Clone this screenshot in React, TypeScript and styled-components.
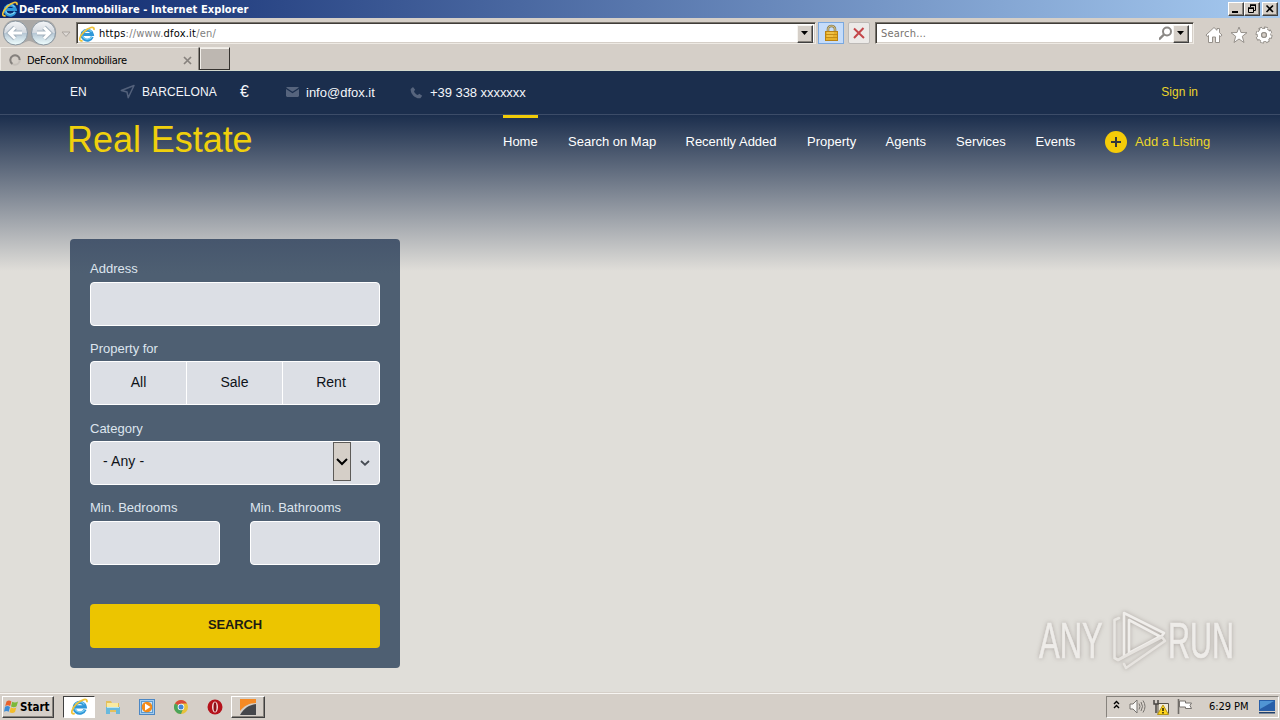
import React from "react";
import styled, { createGlobalStyle } from "styled-components";

const GlobalStyle = createGlobalStyle`
  * {
    box-sizing: border-box;
  }
  body {
    margin: 0;
    overflow: hidden;
    font-family: "Liberation Sans", Arial, sans-serif;
  }
  svg {
    display: block;
    flex: none;
  }
`;

const Screen = styled.div`
  display: flex;
  flex-direction: column;
  width: 1280px;
  height: 720px;
  background: #d5cfc8;
`;

/* browser window */

const TitleBar = styled.div`
  display: flex;
  align-items: center;
  height: 18px;
  padding: 0 2px;
  background: linear-gradient(90deg, #0b256b 0%, #a6caf0 100%);
`;

const WindowTitle = styled.div`
  flex: 1;
  padding-left: 1px;
  font-family: "DejaVu Sans Condensed", "DejaVu Sans", sans-serif;
  font-stretch: condensed;
  font-weight: bold;
  font-size: 11px;
  letter-spacing: 0.09px;
  color: #ffffff;
`;

const WindowButton = styled.div<{ $gap?: number }>`
  display: flex;
  align-items: center;
  justify-content: center;
  width: 16px;
  height: 14px;
  margin-left: ${(p) => p.$gap || 0}px;
  background: #d5cfc8;
  border: 1px solid;
  border-color: #ffffff #404040 #404040 #ffffff;
  box-shadow: inset -1px -1px #87837d;
`;

const AddressBar = styled.div`
  display: flex;
  align-items: center;
  height: 29px;
  padding: 1px 7px 0 2px;
`;

const NavButtons = styled.div`
  width: 74px;
`;

const InputBox = styled.div<{ $width: number; $right?: number }>`
  display: flex;
  align-items: center;
  width: ${(p) => p.$width}px;
  height: 22px;
  background: #ffffff;
  border: 1px solid;
  border-color: #77736c #eeeae4 #eeeae4 #77736c;
  box-shadow: inset 1px 1px #403d38, inset -1px -1px #d5cfc8;
  padding: 1px ${(p) => p.$right || 2}px 0 2px;
`;

const UiText = styled.div<{ $color?: string; $spacing?: number; $left?: number }>`
  padding-left: ${(p) => p.$left || 0}px;
  font-family: "DejaVu Sans Condensed", "DejaVu Sans", sans-serif;
  font-stretch: condensed;
  font-size: 11px;
  letter-spacing: ${(p) => p.$spacing || 0}px;
  white-space: nowrap;
  color: ${(p) => p.$color || "#000000"};
`;

const Dark = styled.span`
  color: #000000;
`;

const TabTitle = styled(UiText)`
  flex: 1;
`;

const Grow = styled.div`
  flex: 1;
`;

const DropButton = styled.div`
  display: flex;
  align-items: center;
  justify-content: center;
  width: 16px;
  height: 18px;
  background: #d5cfc8;
  border: 1px solid;
  border-color: #f6f4f0 #404040 #404040 #f6f4f0;
  box-shadow: inset -1px -1px #87837d;
`;

const ToolButton = styled.div<{ $active?: boolean }>`
  display: flex;
  align-items: center;
  justify-content: center;
  width: ${(p) => (p.$active ? 26 : 22)}px;
  height: 22px;
  margin-left: ${(p) => (p.$active ? 2 : 4)}px;
  background: ${(p) => (p.$active ? "#c5dcfa" : "#eceae8")};
  border: 1px solid ${(p) => (p.$active ? "#7aa8df" : "#bdbab7")};
  border-radius: ${(p) => (p.$active ? 0 : 2)}px;
`;

const SearchWrapper = styled.div`
  margin-left: 5px;
`;

const CommandIcons = styled.div`
  display: flex;
  gap: 7px;
  margin-left: auto;
  padding-top: 3px;
`;

const TabBar = styled.div`
  display: flex;
  height: 24px;
  border-bottom: 1px solid #d3d8cd;
`;

const Tab = styled.div`
  display: flex;
  align-items: center;
  width: 199px;
  padding: 2px 6px 0 8px;
  border-left: 1px solid #eeeae4;
  border-top: 1px solid #eeeae4;
  border-right: 1px solid #8c8882;
`;

const NewTab = styled.div`
  width: 31px;
  height: 23px;
  background: #bdb7b1;
  border: 1px solid;
  border-color: #eeeae4 #35322f #35322f #35322f;
  box-shadow: inset 1px 1px #f2efea;
`;

/* site */

const Page = styled.div`
  height: 621px;
  background: #e0ded9;
`;

const TopBar = styled.div`
  display: flex;
  align-items: center;
  height: 44px;
  padding: 0 82px 2px 70px;
  background: #1b2e4d;
  border-bottom: 1px solid #3c4c68;
`;

const ContactItem = styled.div<{ $width: number; $gap?: number; $size?: number; $spacing?: number; $top?: number }>`
  display: flex;
  align-items: center;
  gap: ${(p) => p.$gap || 0}px;
  width: ${(p) => p.$width}px;
  padding-top: ${(p) => p.$top || 0}px;
  font-size: ${(p) => p.$size || 13}px;
  letter-spacing: ${(p) => p.$spacing || 0}px;
  white-space: nowrap;
  color: #f4f6fa;
`;

const SignIn = styled.div`
  margin-left: auto;
  font-size: 12px;
  color: #ecd62a;
`;

const Hero = styled.div`
  height: 577px;
  padding: 0 70px;
  background: linear-gradient(180deg, #1b2e4d 0, #e0ded9 156px);
`;

const Header = styled.div`
  display: flex;
  justify-content: space-between;
  height: 124px;
`;

const Logo = styled.div`
  margin-left: -3px;
  padding-top: 4px;
  font-size: 36px;
  line-height: 42px;
  letter-spacing: -0.05px;
  color: #f0d00c;
`;

const Menu = styled.div`
  display: flex;
  height: 54px;
`;

const MenuItem = styled.div<{ $active?: boolean; $width: number }>`
  width: ${(p) => p.$width}px;
  margin-right: 30px;
  padding-top: 16px;
  border-top: 3px solid ${(p) => (p.$active ? "#f0cb08" : "transparent")};
  font-size: 13px;
  line-height: 16px;
  white-space: nowrap;
  color: #ffffff;
`;

const AddListing = styled.div`
  display: flex;
  gap: 8px;
  width: 105px;
  padding-top: 16px;
  font-size: 13px;
  line-height: 22px;
  white-space: nowrap;
  color: #ecd62a;
`;

const SearchPanel = styled.div`
  width: 330px;
  height: 429px;
  padding: 22px 20px 20px;
  border-radius: 4px;
  background: linear-gradient(180deg, #46566d 0, #4e5f72 34px);
`;

const Field = styled.div<{ $height?: number }>`
  display: flex;
  flex-direction: column;
  flex: 1;
  height: ${(p) => p.$height || 80}px;
`;

const Label = styled.div<{ $height?: number }>`
  height: ${(p) => p.$height || 20}px;
  font-size: 13px;
  line-height: 15px;
  color: #dde5ee;
`;

const Control = styled.div`
  display: flex;
  align-items: stretch;
  height: 44px;
  background: #dcdfe5;
  border: 1px solid #ffffff;
  border-radius: 4px;
  overflow: hidden;
`;

const Option = styled.div`
  flex: 0 0 96px;
  font-size: 14px;
  line-height: 40px;
  text-align: center;
  color: #0e1218;

  & + & {
    border-left: 1px solid #ffffff;
  }
  &:first-child {
    flex-basis: 95px;
  }
  &:last-child {
    flex: 1;
  }
`;

const SelectValue = styled.div`
  flex: 1;
  padding-left: 12px;
  font-size: 14px;
  line-height: 39px;
  letter-spacing: 0.1px;
  color: #0e1218;
`;

const SelectButton = styled.div`
  display: flex;
  align-items: center;
  justify-content: center;
  width: 18px;
  height: 39px;
  background: #d5cfc8;
  border: 1px solid #5d5b58;
`;

const SelectArrow = styled.div`
  display: flex;
  align-items: center;
  padding: 0 9px;
`;

const FieldRow = styled.div`
  display: flex;
  gap: 30px;
`;

const SearchButton = styled.div`
  height: 44px;
  margin-top: 24px;
  border-radius: 4px;
  background: #ecc500;
  font-size: 13px;
  font-weight: bold;
  line-height: 41px;
  letter-spacing: -0.15px;
  text-align: center;
  color: #1c1b14;
`;

/* lies over the desktop */
const Watermark = styled.div`
  position: absolute;
  left: 1039px;
  top: 607px;
  display: flex;
  align-items: center;
  width: 200px;
  height: 68px;
  filter: drop-shadow(0 0 2px rgba(120, 110, 105, 0.5));
`;

const WatermarkText = styled.div<{ $width: number; $scale: number }>`
  width: ${(p) => p.$width}px;
  font-size: 50px;
  line-height: 68px;
  white-space: nowrap;
  transform: scaleX(${(p) => p.$scale});
  transform-origin: left center;
  color: #eeece9;
  -webkit-text-stroke: 0.6px #eeece9;
`;

/* taskbar */

const Taskbar = styled.div`
  display: flex;
  align-items: center;
  height: 28px;
  padding: 2px 1px 2px 2px;
  background: #d5cfc8;
  border-top: 1px solid #d5cfc8;
  box-shadow: inset 0 1px #f7f5f2;
`;

const StartButton = styled.div`
  display: flex;
  align-items: center;
  gap: 1px;
  width: 52px;
  height: 22px;
  padding-left: 1px;
  border: 1px solid;
  border-color: #ffffff #404040 #404040 #ffffff;
  box-shadow: inset -1px -1px #87837d;
  font-family: "DejaVu Sans Condensed", "DejaVu Sans", sans-serif;
  font-stretch: condensed;
  font-size: 11.5px;
  font-weight: bold;
`;

const TaskButton = styled.div<{ $kind?: "pressed" | "raised"; $width: number }>`
  display: flex;
  align-items: center;
  justify-content: center;
  width: ${(p) => p.$width}px;
  height: 22px;
  background: ${(p) => (p.$kind === "pressed" ? "#ffffff" : "transparent")};
  border: 1px solid;
  border-color: ${(p) =>
    p.$kind === "pressed"
      ? "#404040 #ffffff #ffffff #404040"
      : p.$kind === "raised"
        ? "#ffffff #404040 #404040 #ffffff"
        : "transparent"};
  box-shadow: ${(p) => (p.$kind === "raised" ? "inset -1px -1px #87837d" : "none")};
`;

const TaskList = styled.div`
  display: flex;
  margin-left: 9px;
`;

const Tray = styled.div`
  display: flex;
  align-items: center;
  width: 173px;
  height: 22px;
  margin-left: auto;
  padding: 0 3px 0 6px;
  border: 1px solid;
  border-color: #87837d #ffffff #ffffff #87837d;
`;

const TrayIcon = styled.div<{ $gap: number }>`
  margin-left: ${(p) => p.$gap}px;
`;

const Clock = styled.div`
  width: 41px;
  margin: 0 10px 0 16px;
`;

function ExplorerIcon({ size = 16 }: { size?: number }) {
  return (
    <svg width={size} height={size} viewBox="0 0 16 16" fill="none">
      <path d="M13.2 10.8A5.2 5 0 1 1 13.4 8.4H4.5" stroke="#2f97d8" strokeWidth="3" />
      <path d="M12.8 10.9A5 4.8 0 0 1 3.6 9.6M4 6A5 5 0 0 1 12.6 6" stroke="#7fd0f3" strokeWidth="1.1" />
      <path d="M3.6 14.6C-.9 16 .2 10.4 5 5.8C9.6 1.4 16 -.6 14.9 4" stroke="#efc33a" strokeWidth="1.7" />
    </svg>
  );
}

function BackForward() {
  return (
    <svg width="72" height="28" viewBox="0 0 72 28">
      <defs>
        <linearGradient id="round" x1="0" y1="0" x2="0" y2="1">
          <stop offset="0" stopColor="#f4f5f7" />
          <stop offset=".48" stopColor="#d3d9e0" />
          <stop offset=".5" stopColor="#b4c5d3" />
          <stop offset="1" stopColor="#f0ffff" />
        </linearGradient>
      </defs>
      <path d="M13 1H42C59 1 58 27 41 26C33 26 31 22 27 22C23 22 21 26 13 26C-3 26-3 1 13 1Z" fill="#aaa8a6" />
      <circle cx="13.5" cy="14" r="12" fill="url(#round)" stroke="#8b97a1" />
      <circle cx="41.5" cy="14" r="12" fill="url(#round)" stroke="#8b97a1" />
      <path d="M20 14H8M13 8.5L7.5 14L13 19.5" stroke="#a5b3bf" strokeWidth="5" fill="none" />
      <path d="M20 14H8M13 8.5L7.5 14L13 19.5" stroke="#ffffff" strokeWidth="3" fill="none" />
      <path d="M35 14H47M42 8.5L47.5 14L42 19.5" stroke="#a5b3bf" strokeWidth="5" fill="none" />
      <path d="M35 14H47M42 8.5L47.5 14L42 19.5" stroke="#ffffff" strokeWidth="3" fill="none" />
      <path d="M60 13H68L64 17.5Z" fill="#dedad6" stroke="#aaa49f" />
    </svg>
  );
}

function DownTriangle() {
  return (
    <svg width="8" height="5" viewBox="0 0 8 5">
      <path d="M0 0H7L3.5 4Z" fill="#000" />
    </svg>
  );
}

function LockIcon() {
  return (
    <svg width="15" height="18" viewBox="0 0 15 18">
      <path d="M4 9V5C4 1 11 1 11 5V9" fill="none" stroke="#8f8052" strokeWidth="2.6" />
      <path d="M4 9V5C4 1 11 1 11 5V9" fill="none" stroke="#d9c98e" strokeWidth="1" />
      <rect x="1.5" y="7.5" width="12" height="9" fill="#e8b128" stroke="#b98214" />
      <path d="M2 10.5H13M2 13.5H13" stroke="#c58d17" />
      <path d="M3 9H10M3 12H9" stroke="#f8d264" />
    </svg>
  );
}

function AnyRunMark() {
  return (
    <svg width="56" height="68" viewBox="0 0 56 68" fill="none" strokeLinecap="round" strokeLinejoin="round">
      <path d="M7 11L2.5 13V51L6 53L16 47" stroke="#e9e7e3" strokeWidth="2.6" />
      <path d="M12 49V6L52 26L49 30L17 13V46L36 36L47 30" stroke="#f0eeeb" strokeWidth="2.6" />
      <path d="M6 53L50 30L53 34L14 61L12 57" stroke="#e7e4e0" strokeWidth="2.6" />
    </svg>
  );
}

const options = ["All", "Sale", "Rent"];

const menu = [
  { name: "Home", width: 35 },
  { name: "Search on Map", width: 87.5 },
  { name: "Recently Added", width: 91.5 },
  { name: "Property", width: 48.5 },
  { name: "Agents", width: 40.5 },
  { name: "Services", width: 49.5 },
  { name: "Events", width: 39.5 },
];

function Browser() {
  return (
    <>
      <TitleBar>
        <ExplorerIcon />
        <WindowTitle>DeFconX Immobiliare - Internet Explorer</WindowTitle>
        <WindowButton>
          <svg width="12" height="10">
            <path d="M2 8H8" stroke="#000" strokeWidth="2" />
          </svg>
        </WindowButton>
        <WindowButton>
          <svg width="12" height="10" fill="none" stroke="#000">
            <path d="M4 1H10M4.5 1V3M9.5 1V6.5H8M2 4H8" />
            <path d="M4 1.2H10M2 4.2H8" strokeWidth="1.6" />
            <path d="M2.5 4V8.5H7.5V4" />
          </svg>
        </WindowButton>
        <WindowButton $gap={2}>
          <svg width="12" height="10">
            <path d="M2.5 1.5L9 8M9 1.5L2.5 8" stroke="#000" strokeWidth="1.6" />
          </svg>
        </WindowButton>
      </TitleBar>
      <AddressBar>
        <NavButtons>
          <BackForward />
        </NavButtons>
        <InputBox $width={740}>
          <ExplorerIcon />
          <UiText $color="#808080" $spacing={0.22} $left={4}>
            <Dark>https</Dark>://www.<Dark>dfox.it</Dark>/en/
          </UiText>
          <Grow />
          <DropButton>
            <DownTriangle />
          </DropButton>
        </InputBox>
        <ToolButton $active>
          <LockIcon />
        </ToolButton>
        <ToolButton>
          <svg width="12" height="12">
            <path d="M1 1.5L11 11M10.5 1L1 11" stroke="#c4474b" strokeWidth="2" />
          </svg>
        </ToolButton>
        <SearchWrapper>
          <InputBox $width={319} $right={4}>
            <UiText $color="#77736f" $spacing={0.2} $left={3}>
              Search...
            </UiText>
            <Grow />
            <svg width="14" height="15" fill="none" stroke="#8b8885" strokeWidth="2">
              <circle cx="8" cy="5.5" r="4" />
              <path d="M5 8.5L0 13.5" strokeWidth="2.4" />
            </svg>
            <DropButton>
              <DownTriangle />
            </DropButton>
          </InputBox>
        </SearchWrapper>
        <CommandIcons>
          <svg width="18" height="18" viewBox="0 0 18 18" fill="#fff" stroke="#96918b">
            <path d="M1 9L9 1.5L12 4.3V2.5H14.5V6.7L17 9L15.8 10.5L14.5 9.5V16.5H10.5V11H7.5V16.5H3.5V9.5L2.2 10.5Z" />
          </svg>
          <svg width="18" height="18" viewBox="0 0 18 18" fill="#fff" stroke="#96918b">
            <path d="M9 1L11 6.5L17 6.7L12.3 10.3L14 16.5L9 13L4 16.5L5.7 10.3L1 6.7L7 6.5Z" />
          </svg>
          <svg width="18" height="18" viewBox="0 0 18 18">
            <circle cx="9" cy="9" r="6.6" fill="none" stroke="#8e8983" strokeWidth="3.8" strokeDasharray="3.2 1.98" />
            <circle cx="9" cy="9" r="4.7" fill="none" stroke="#8e8983" strokeWidth="5" />
            <circle cx="9" cy="9" r="6.5" fill="none" stroke="#fff" strokeWidth="2.2" strokeDasharray="2.2 2.9" strokeDashoffset="-.4" />
            <circle cx="9" cy="9" r="4.7" fill="none" stroke="#fff" strokeWidth="3.3" />
            <circle cx="9" cy="9" r="2.4" fill="#d5cfc8" stroke="#8e8983" />
          </svg>
        </CommandIcons>
      </AddressBar>
      <TabBar>
        <Tab>
          <svg width="12" height="12" fill="none" strokeWidth="2">
            <circle cx="6" cy="6" r="4.7" stroke="#c6c0ba" />
            <path d="M3.4 9.9A4.7 4.7 0 1 1 10.7 6" stroke="#85817d" />
          </svg>
          <TabTitle $left={6} $spacing={-0.32}>
            DeFconX Immobiliare
          </TabTitle>
          <svg width="9" height="9">
            <path d="M1 1L8 8M8 1L1 8" stroke="#87827e" strokeWidth="1.7" />
          </svg>
        </Tab>
        <NewTab />
      </TabBar>
    </>
  );
}

function Site() {
  return (
    <Page>
      <TopBar>
        <ContactItem $width={50} $size={12}>
          EN
        </ContactItem>
        <ContactItem $width={120} $gap={7} $size={12} $spacing={0.08}>
          <svg width="15" height="15" viewBox="0 0 15 15" fill="none" stroke="#53617b" strokeWidth="1.5">
            <path d="M1.3 6.5L14 1.5L8.2 13.7L7 8Z" strokeLinejoin="round" />
          </svg>
          BARCELONA
        </ContactItem>
        <ContactItem $width={46} $size={16}>
          €
        </ContactItem>
        <ContactItem $width={124} $gap={7} $top={1}>
          <svg width="13" height="10" viewBox="0 0 13 10">
            <path d="M1 0H12L13 1V9L12 10H1L0 9V1Z" fill="#56647d" />
            <path d="M0 1.3L6.5 5.5L13 1.3" fill="none" stroke="#1b2e4d" strokeWidth="1.3" />
          </svg>
          info@dfox.it
        </ContactItem>
        <ContactItem $width={118} $gap={7} $spacing={-0.05} $top={1}>
          <svg width="13" height="13" viewBox="0 0 13 13">
            <path d="M3 1L5.2 3.7L4 5.3C4.5 7 6 8.5 7.8 9.1L9.3 7.8L12.2 9.8L10.4 12.2C5.8 13.3.1 7.9.7 3Z" fill="#56647d" />
          </svg>
          +39 338 xxxxxxx
        </ContactItem>
        <SignIn>Sign in</SignIn>
      </TopBar>
      <Hero>
        <Header>
          <Logo>Real Estate</Logo>
          <Menu>
            {menu.map((item) => (
              <MenuItem key={item.name} $width={item.width} $active={item.name === "Home"}>
                {item.name}
              </MenuItem>
            ))}
            <AddListing>
              <svg width="22" height="22">
                <circle cx="11" cy="11" r="11" fill="#f5cb08" />
                <path d="M6 11H16M11 6V16" stroke="#34373b" strokeWidth="2" />
              </svg>
              Add a Listing
            </AddListing>
          </Menu>
        </Header>
        <SearchPanel>
          <Field>
            <Label $height={21}>Address</Label>
            <Control />
          </Field>
          <Field>
            <Label>Property for</Label>
            <Control>
              {options.map((option) => (
                <Option key={option}>{option}</Option>
              ))}
            </Control>
          </Field>
          <Field $height={79}>
            <Label>Category</Label>
            <Control>
              <SelectValue>- Any -</SelectValue>
              <SelectButton>
                <svg width="12" height="8">
                  <path d="M1 1L6 6L11 1" fill="none" stroke="#000" strokeWidth="2" />
                </svg>
              </SelectButton>
              <SelectArrow>
                <svg width="10" height="6">
                  <path d="M1 1L5 4.7L9 1" fill="none" stroke="#474c54" strokeWidth="1.8" />
                </svg>
              </SelectArrow>
            </Control>
          </Field>
          <FieldRow>
            <Field>
              <Label $height={21}>Min. Bedrooms</Label>
              <Control />
            </Field>
            <Field>
              <Label $height={21}>Min. Bathrooms</Label>
              <Control />
            </Field>
          </FieldRow>
          <SearchButton>SEARCH</SearchButton>
        </SearchPanel>
      </Hero>
    </Page>
  );
}

function Task() {
  return (
    <Taskbar>
      <StartButton>
        <svg width="15" height="16" viewBox="0 0 15 16">
          <path d="M2.5 2.5Q5 .5 7.4 2.5L6.2 7Q3.8 5.5 1.2 7Z" fill="#e8622c" />
          <path d="M8.2 2.8Q11 4.4 14 2.6L12.6 7.3Q10 9 7 7.4Z" fill="#7cb83a" />
          <path d="M1 7.8Q3.6 6.4 6 7.9L4.7 12.8Q2.6 11.2 0 12.7Z" fill="#3d8cd6" />
          <path d="M6.8 8.3Q9.8 10 12.3 8.4L11 13Q8.4 14.7 5.5 13.2Z" fill="#f3bd2c" />
        </svg>
        Start
      </StartButton>
      <TaskList>
        <TaskButton $width={32} $kind="pressed">
          <ExplorerIcon size={17} />
        </TaskButton>
        <TaskButton $width={36}>
          <svg width="16" height="16" viewBox="0 0 16 16">
            <path d="M1 2H6L7 4H14V13H1Z" fill="#e3c05b" />
            <path d="M2 4H13V8H2Z" fill="#f9eaa1" />
            <path d="M1 8H15V15H11V11H5V15H1Z" fill="#68b9dd" />
            <path d="M2 8.5H14" stroke="#b7e6f4" />
          </svg>
        </TaskButton>
        <TaskButton $width={32}>
          <svg width="16" height="16" viewBox="0 0 16 16">
            <rect x=".5" y=".5" width="15" height="15" fill="#a5cced" stroke="#4c87c4" />
            <rect x="2.5" y="2.5" width="11" height="11" fill="#cae2f5" stroke="#5b9bd2" />
            <circle cx="8" cy="8" r="5.3" fill="#f38b19" />
            <path d="M6 4.5L11.5 8L6 11.5Z" fill="#fff" />
          </svg>
        </TaskButton>
        <TaskButton $width={36}>
          <svg width="14" height="14" viewBox="0 0 14 14">
            <circle cx="7" cy="7" r="7" fill="#e8c23b" />
            <path d="M7 7L1 3.4A7 7 0 0 1 13 3.4H7Z" fill="#d94a3b" />
            <path d="M7 7L1 3.4A7 7 0 0 0 7 14L9 9Z" fill="#4ba45a" />
            <circle cx="7" cy="7" r="3.3" fill="#fff" />
            <circle cx="7" cy="7" r="2.5" fill="#4386d5" />
          </svg>
        </TaskButton>
        <TaskButton $width={32}>
          <svg width="16" height="16" viewBox="0 0 16 16">
            <circle cx="8" cy="8" r="7.5" fill="#b5121b" />
            <ellipse cx="8" cy="8" rx="3" ry="5.5" fill="#f5dcdc" />
            <ellipse cx="8" cy="8" rx="1.5" ry="4.7" fill="#8e1018" />
          </svg>
        </TaskButton>
        <TaskButton $width={34} $kind="raised">
          <svg width="18" height="16" viewBox="0 0 18 16">
            <path d="M1 0H17V4C10 4 5 7 1 12Z" fill="#f58a24" />
            <path d="M17 5V16H1C5 9 10 6 17 5Z" fill="#45474b" />
          </svg>
        </TaskButton>
      </TaskList>
      <Tray>
        <svg width="8" height="13" fill="none" stroke="#000" strokeWidth="1.4">
          <path d="M1 4L3.5 1.5L6 4M1 8L3.5 5.5L6 8" />
        </svg>
        <TrayIcon $gap={8}>
          <svg width="17" height="15" viewBox="0 0 17 15" fill="none" stroke="#77736f">
            <path d="M1 5H4L8 1V14L4 10H1Z" fill="#f8f7f5" />
            <path d="M10 4.5Q12 7.5 10 10.5M12 3Q15 7.5 12 12M14 1.5Q18 7.5 14 13.5" />
          </svg>
        </TrayIcon>
        <TrayIcon $gap={7}>
          <svg width="16" height="16" viewBox="0 0 16 16">
            <path d="M5 4.5H15.5V14.5H5Z" fill="#eee9d7" stroke="#565148" />
            <path d="M1 1V5H5V1M3 5V14" fill="none" stroke="#4a4743" strokeWidth="1.5" />
            <path d="M10 6L15.5 15.5H4.5Z" fill="#ffd51c" stroke="#b69516" />
            <path d="M10 9V12M10 13V14.5" stroke="#000" strokeWidth="1.3" />
          </svg>
        </TrayIcon>
        <TrayIcon $gap={8}>
          <svg width="16" height="16" viewBox="0 0 16 16">
            <path d="M1.5 0V15" stroke="#706c68" strokeWidth="1.6" />
            <path d="M2.5 2H8.5V4H14.5L13 6.5L14.5 9.5H8.5V8H2.5Z" fill="#fff" stroke="#77736f" />
          </svg>
        </TrayIcon>
        <Clock>
          <UiText $spacing={-0.05}>6:29 PM</UiText>
        </Clock>
        <svg width="16" height="14" viewBox="0 0 16 14">
          <rect width="16" height="11" fill="#285fa9" />
          <path d="M1 1H15L1 9Z" fill="#5095d4" />
          <path d="M0 12H16V13.5H0Z" fill="#20406c" />
        </svg>
      </Tray>
    </Taskbar>
  );
}

export default function App() {
  return (
    <Screen>
      <GlobalStyle />
      <Browser />
      <Site />
      <Task />
      <Watermark>
        <WatermarkText $width={73} $scale={0.62}>
          ANY
        </WatermarkText>
        <AnyRunMark />
        <WatermarkText $width={63} $scale={0.61}>
          RUN
        </WatermarkText>
      </Watermark>
    </Screen>
  );
}
